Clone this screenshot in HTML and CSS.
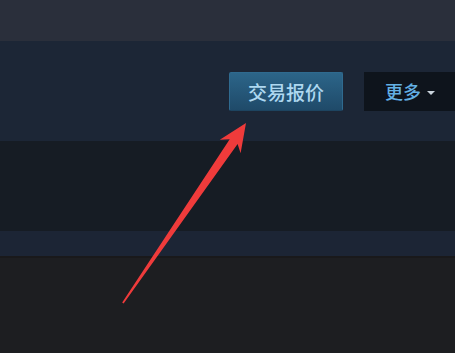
FILE: index.html
```html
<!DOCTYPE html>
<html lang="zh">
<head>
<meta charset="utf-8">
<link rel="stylesheet" href="styles.css">
</head>
<body>
<div class="page">
  <div class="topbar"></div>
  <div class="actions">
    <button class="btn-trade">交易报价</button>
    <button class="btn-more">更多<span class="caret"></span></button>
  </div>
  <div class="dark-strip"></div>
  <div class="mid-strip"></div>
  <div class="footer"></div>
  <svg class="arrow" width="455" height="353" viewBox="0 0 455 353">
    <polygon fill="#ef3b3b" points="246,123 219.8,139.8 229.7,139.3 122.2,302.6 123.6,303.4 237.6,144.1 240.6,153.2"/>
  </svg>
</div>
</body>
</html>
```
FILE: styles.css
```css
html, body {
  margin: 0;
  padding: 0;
  background: #1d1e21;
}
.page {
  position: relative;
  width: 455px;
  height: 353px;
  overflow: hidden;
  font-family: "Noto Sans CJK SC", "Noto Sans", sans-serif;
}
.topbar {
  height: 41px;
  background: #2a2f3b;
}
.actions {
  height: 100px;
  background: #1c2636;
  display: flex;
  justify-content: flex-end;
  align-items: flex-start;
  gap: 21px;
  padding-top: 31px;
  box-sizing: border-box;
}
.btn-trade {
  width: 114px;
  height: 39px;
  border: 1px solid #2f6a8f;
  border-bottom-color: #1d4460;
  border-radius: 2px;
  background: linear-gradient(to bottom, #2c6589, #1f4a69);
  color: #aed8f0;
  font-family: "Noto Sans CJK SC", sans-serif;
  font-size: 19px;
  font-weight: 500;
  padding: 0;
  line-height: 37px;
}
.btn-more {
  width: 91px;
  height: 39px;
  border: none;
  background: #0e141c;
  color: #63b0e4;
  font-family: "Noto Sans CJK SC", sans-serif;
  font-size: 18px;
  font-weight: 500;
  padding: 0 0 0 21px;
  display: flex;
  align-items: center;
  gap: 6px;
  line-height: 39px;
}
.caret {
  width: 0;
  height: 0;
  border-left: 4px solid transparent;
  border-right: 4px solid transparent;
  border-top: 4px solid #c9d3dc;
  margin-top: 2px;
}
.dark-strip {
  height: 90px;
  background: #161c24;
}
.mid-strip {
  height: 25px;
  background: #1c2535;
}
.footer {
  height: 97px;
  background: #1d1e21;
  border-top: 2px solid #19191b;
  box-sizing: border-box;
}
.arrow {
  position: absolute;
  left: 0;
  top: 0;
}
```
